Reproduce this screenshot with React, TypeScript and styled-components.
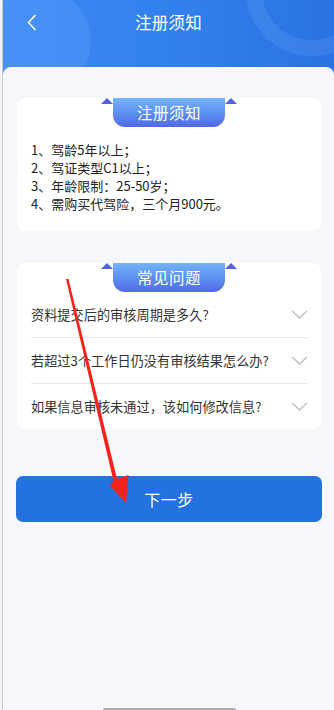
import React, { FC } from "react";
import styled, { createGlobalStyle } from "styled-components";

const GlobalStyle = createGlobalStyle`
  html, body {
    margin: 0;
    padding: 0;
    background: #f5f7fb;
    font-family: "Noto Sans CJK SC", "Noto Sans", sans-serif;
  }
`;

const Frame = styled.div`
  position: relative;
  display: flex;
  width: 334px;
  height: 710px;
  overflow: hidden;
`;

const SideStrip = styled.div`
  width: 2px;
  background: #f3f3f3;
  border-right: 1px solid #c9c9c9;
`;

const Screen = styled.div`
  flex: 1;
  display: flex;
  flex-direction: column;
  background: #f5f7fb;
`;

const Header = styled.div`
  position: relative;
  height: 75px;
  overflow: hidden;
  background: linear-gradient(90deg, #3c89f4 0%, #3280ee 50%, #2a72e2 100%);
`;

const Bubble = styled.div`
  position: absolute;
  left: -18px;
  top: -12px;
  width: 106px;
  height: 106px;
  border-radius: 50%;
  background: rgba(110, 170, 255, 0.26);
`;

const Ring = styled.div`
  position: absolute;
  right: -44px;
  top: -76px;
  width: 100px;
  height: 100px;
  border-radius: 50%;
  border: 16px solid rgba(120, 175, 255, 0.2);
`;

const TopBar = styled.div`
  position: relative;
  height: 44px;
  display: flex;
  align-items: center;
  justify-content: center;
`;

const BackButton = styled.div`
  position: absolute;
  left: 23px;
  top: 14px;
  width: 12px;
  height: 17px;
  display: flex;
  align-items: center;
  justify-content: center;
`;

const Title = styled.div`
  color: #fff;
  font-size: 16.5px;
  letter-spacing: 0.3px;
`;

const Panel = styled.div`
  position: relative;
  flex: 1;
  margin-top: -8px;
  border-radius: 8px 8px 0 0;
  background: #f5f7fb;
  padding: 31px 13px 0 14px;
  display: flex;
  flex-direction: column;
`;

const Card = styled.div<{ $gap?: number }>`
  background: #fff;
  border-radius: 8px;
  margin-bottom: ${(p) => p.$gap ?? 0}px;
  display: flex;
  flex-direction: column;
`;

const RibbonWrap = styled.div`
  align-self: center;
  position: relative;
  display: flex;
`;

const Ear = styled.div`
  width: 12px;
  height: 6px;
  background: #5660e2;
  clip-path: polygon(50% 0, 100% 100%, 0 100%);
`;

const RibbonBody = styled.div`
  width: 112px;
  height: 29px;
  border-radius: 0 0 12px 12px;
  background: linear-gradient(180deg, #73b3fa 0%, #5c8ef0 55%, #5168e6 100%);
  color: #fff;
  font-size: 15.5px;
  line-height: 29px;
  text-align: center;
  letter-spacing: 0.5px;
`;

const RuleList = styled.div`
  padding: 14px 14px 18px 14px;
  color: #222;
  font-size: 13px;
  line-height: 18px;
`;

const FaqRow = styled.div<{ $first?: boolean }>`
  margin: 0 13px 0 14px;
  height: 45px;
  display: flex;
  align-items: center;
  justify-content: space-between;
  border-top: ${(p) => (p.$first ? "none" : "1px solid #e6e6e6")};
  color: #333;
  font-size: 13.2px;
`;

const NextButton = styled.button`
  margin: 0 -1px;
  height: 46px;
  border: none;
  border-radius: 7px;
  background: #2372e0;
  color: #fff;
  font-family: inherit;
  font-size: 16px;
  letter-spacing: 0.5px;
`;

const HomeBar = styled.div`
  margin-top: auto;
  align-self: center;
  width: 133px;
  height: 2px;
  background: #ababab;
  border-radius: 2px 2px 0 0;
`;

const ArrowLayer = styled.svg`
  position: absolute;
  left: 0;
  top: 0;
  pointer-events: none;
`;

const Ribbon: FC<{ title: string }> = ({ title }) => (
  <RibbonWrap>
    <Ear />
    <RibbonBody>{title}</RibbonBody>
    <Ear />
  </RibbonWrap>
);

const Chevron: FC = () => (
  <svg width="17" height="9" viewBox="0 0 17 9">
    <polyline points="1,1 8.5,8 16,1" fill="none" stroke="#bdbdbd" strokeWidth="1.3" />
  </svg>
);

const rules = ["1、驾龄5年以上；", "2、驾证类型C1以上；", "3、年龄限制：25-50岁；", "4、需购买代驾险，三个月900元。"];

const questions = [
  "资料提交后的审核周期是多久?",
  "若超过3个工作日仍没有审核结果怎么办?",
  "如果信息审核未通过，该如何修改信息?",
];

const App: FC = () => (
  <>
    <GlobalStyle />
    <Frame>
      <SideStrip />
      <Screen>
        <Header>
          <Bubble />
          <Ring />
          <TopBar>
            <BackButton>
              <svg width="10" height="17" viewBox="0 0 10 17">
                <polyline points="8.5,1 1.5,8.5 8.5,16" fill="none" stroke="#fff" strokeWidth="1.5" />
              </svg>
            </BackButton>
            <Title>注册须知</Title>
          </TopBar>
        </Header>
        <Panel>
          <Card $gap={32}>
            <Ribbon title="注册须知" />
            <RuleList>
              {rules.map((r) => (
                <div key={r}>{r}</div>
              ))}
            </RuleList>
          </Card>
          <Card $gap={47}>
            <Ribbon title="常见问题" />
            {questions.map((q, i) => (
              <FaqRow key={q} $first={i === 0}>
                <span>{q}</span>
                <Chevron />
              </FaqRow>
            ))}
          </Card>
          <NextButton>下一步</NextButton>
          <HomeBar />
        </Panel>
      </Screen>
      <ArrowLayer width="334" height="710" viewBox="0 0 334 710">
        <polygon
          points="66,279 68.5,279 117,479 128.5,475 126,503 110,486 113.5,481"
          fill="#f2231b"
        />
      </ArrowLayer>
    </Frame>
  </>
);

export default App;
